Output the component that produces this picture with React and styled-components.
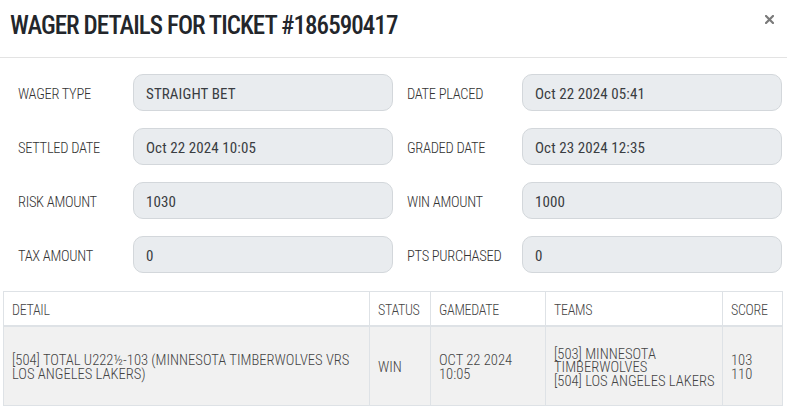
import React from 'react';
import styled, { createGlobalStyle } from 'styled-components';

const GlobalStyle = createGlobalStyle`
  * { box-sizing: border-box; }
  body {
    margin: 0;
    background: #fff;
    font-family: Roboto, "Liberation Sans", sans-serif;
    font-stretch: 75%;
    color: #212529;
  }
`;

const fields = [
  ['WAGER TYPE', 'STRAIGHT BET', 'DATE PLACED', 'Oct 22 2024 05:41'],
  ['SETTLED DATE', 'Oct 22 2024 10:05', 'GRADED DATE', 'Oct 23 2024 12:35'],
  ['RISK AMOUNT', '1030', 'WIN AMOUNT', '1000'],
  ['TAX AMOUNT', '0', 'PTS PURCHASED', '0'],
];

const columns = [
  ['DETAIL', 366],
  ['STATUS', 61],
  ['GAMEDATE', 115],
  ['TEAMS', 177],
  ['SCORE', 60],
];

const App = () => {
  return (
    <Modal>
      <GlobalStyle />
      <Header>
        <Title>WAGER DETAILS FOR TICKET #186590417</Title>
        <Close aria-label="Close">
          <svg width="9" height="9" viewBox="0 0 9 9">
            <path d="M1 1 L8 8 M8 1 L1 8" stroke="#7a7a7a" strokeWidth="2.2" strokeLinecap="square" />
          </svg>
        </Close>
      </Header>
      <Form>
        {fields.map((row) => (
          <React.Fragment key={row[0]}>
            <Field>
              <Label>{row[0]}</Label>
              <Value>{row[1]}</Value>
            </Field>
            <Field>
              <Label>{row[2]}</Label>
              <Value>{row[3]}</Value>
            </Field>
          </React.Fragment>
        ))}
      </Form>
      <Table>
        <colgroup>
          {columns.map(([name, w]) => (
            <col key={name} style={{ width: w }} />
          ))}
        </colgroup>
        <thead>
          <tr>
            {columns.map(([name]) => (
              <Th key={name}>{name}</Th>
            ))}
          </tr>
        </thead>
        <tbody>
          <tr>
            <Td>
              [504] TOTAL U222½-103 (MINNESOTA TIMBERWOLVES VRS
              <br />
              LOS ANGELES LAKERS)
            </Td>
            <Td>WIN</Td>
            <Td>
              OCT 22 2024
              <br />
              10:05
            </Td>
            <Td>
              [503] MINNESOTA
              <br />
              TIMBERWOLVES
              <br />
              [504] LOS ANGELES LAKERS
            </Td>
            <Td>
              103
              <br />
              110
            </Td>
          </tr>
        </tbody>
      </Table>
    </Modal>
  );
};

export default App;

// STYLED COMPONENTS
const Modal = styled.div`
  width: 787px;
  height: 409px;
  background: #fff;
`;

const Header = styled.div`
  height: 58px;
  display: flex;
  align-items: flex-start;
  justify-content: space-between;
  padding: 9px 13px 0 10px;
  border-bottom: 1px solid #e3e3e3;
`;

const Title = styled.h1`
  margin: 0;
  font-size: 25px;
  font-weight: 500;
  letter-spacing: -0.95px;
  line-height: 34px;
  color: #23262b;
`;

const Close = styled.span`
  display: flex;
  margin-top: 6px;
`;

const Form = styled.div`
  display: grid;
  grid-template-columns: 385px 385px;
  column-gap: 4px;
  row-gap: 17px;
  padding: 16px 5px 18px 8px;
`;

const Field = styled.div`
  display: flex;
  align-items: center;
  height: 37px;
`;

const Label = styled.div`
  width: 125px;
  padding: 3px 0 0 10px;
  font-weight: 300;
  font-size: 14.5px;
  letter-spacing: -0.3px;
  color: #333;
`;

const Value = styled.div`
  flex: 1;
  height: 37px;
  display: flex;
  align-items: center;
  padding: 3px 0 0 12px;
  background: #e9ecef;
  border: 1px solid #d3d7db;
  border-radius: 10px;
  font-size: 15px;
  letter-spacing: 0.1px;
  color: #3a3d42;
`;

const Table = styled.table`
  margin: 0 5px 0 3px;
  width: 779px;
  table-layout: fixed;
  border-collapse: collapse;
  font-weight: 300;
  color: #444;
`;

const Th = styled.th`
  height: 34px;
  padding: 3px 8px 0;
  text-align: left;
  font-weight: 300;
  font-size: 14px;
  letter-spacing: -0.3px;
  border: 1px solid #dee2e6;
  border-bottom-width: 2px;
`;

const Td = styled.td`
  height: 80px;
  padding: 4px 8px 0;
  font-size: 14.6px;
  line-height: 13.5px;
  background: #f1f1f1;
  border: 1px solid #dee2e6;
  vertical-align: middle;
  white-space: nowrap;
`;
